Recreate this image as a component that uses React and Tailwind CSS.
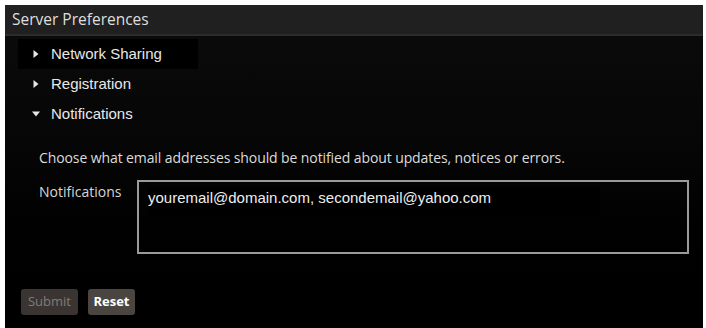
import React from 'react'

function Arrow({ open }) {
  return (
    <svg className="w-[8px] h-[8px]" viewBox="0 0 8 8">
      {open ? <path d="M0 1.5h8L4 6.5z" fill="#e6e6e6" /> : <path d="M1.5 0v8L6.5 4z" fill="#e6e6e6" />}
    </svg>
  )
}

function MenuRow({ label, open, active }) {
  return (
    <div
      className={
        'flex items-center h-[30px] w-[180px] pl-[14px] ' + (active ? 'bg-black' : '')
      }
    >
      <Arrow open={open} />
      <span className="ml-[11px] text-[15px] text-[#e8e8e8] font-['Liberation_Sans',Arial,sans-serif]">{label}</span>
    </div>
  )
}

export default function App() {
  return (
    <div className="w-[706px] h-[328px] bg-white pt-[5px] pl-[5px] pr-[3px] overflow-hidden">
      <div className="h-full bg-gradient-to-b from-[#0c0c0c] via-[#050505] to-black flex flex-col">
        {/* header */}
        <div className="h-[31px] bg-[#202020] border-b-2 border-[#2c2c2c] flex items-center pl-[7px]">
          <span className="text-[15.5px] text-[#dedede] font-['Open_Sans',sans-serif]">Server Preferences</span>
        </div>

        {/* sections */}
        <div className="pl-[13px] pt-[3px] flex flex-col">
          <MenuRow label="Network Sharing" active />
          <MenuRow label="Registration" />
          <MenuRow label="Notifications" open />
        </div>

        <div className="pl-[34px] pr-[14px] font-['Open_Sans',sans-serif]">
          <p className="mt-[18px] text-[14px] text-[#dcdcdc] tracking-[-0.1px]">
            Choose what email addresses should be notified about updates, notices or errors.
          </p>
          <div className="flex mt-[12px]">
            <span className="w-[98px] pt-[1px] text-[14px] text-[#d6d6d6]">Notifications</span>
            <div className="w-[552px] h-[74px] border-2 border-[#9a9a9a] pl-[9px] pt-[5px]">
              <div className="w-[452px] h-[30px] bg-black text-[15px] leading-[20px] pt-[1px] text-[#eeeeee] font-['Liberation_Sans',Arial,sans-serif]">
                youremail@domain.com, secondemail@yahoo.com
              </div>
            </div>
          </div>
        </div>

        {/* buttons */}
        <div className="flex gap-[10px] pl-[16px] mt-[35px]">
          <button className="h-[26px] w-[57px] rounded-[3px] bg-[#3a3532] text-[13px] text-[#827c78] font-['Open_Sans',sans-serif] shadow-[0_0_3px_#000]">
            Submit
          </button>
          <button className="h-[26px] w-[47px] rounded-[3px] bg-[#4b4542] text-[13px] font-bold text-white font-['Open_Sans',sans-serif] shadow-[0_0_3px_#000]">
            Reset
          </button>
        </div>
      </div>
    </div>
  )
}
